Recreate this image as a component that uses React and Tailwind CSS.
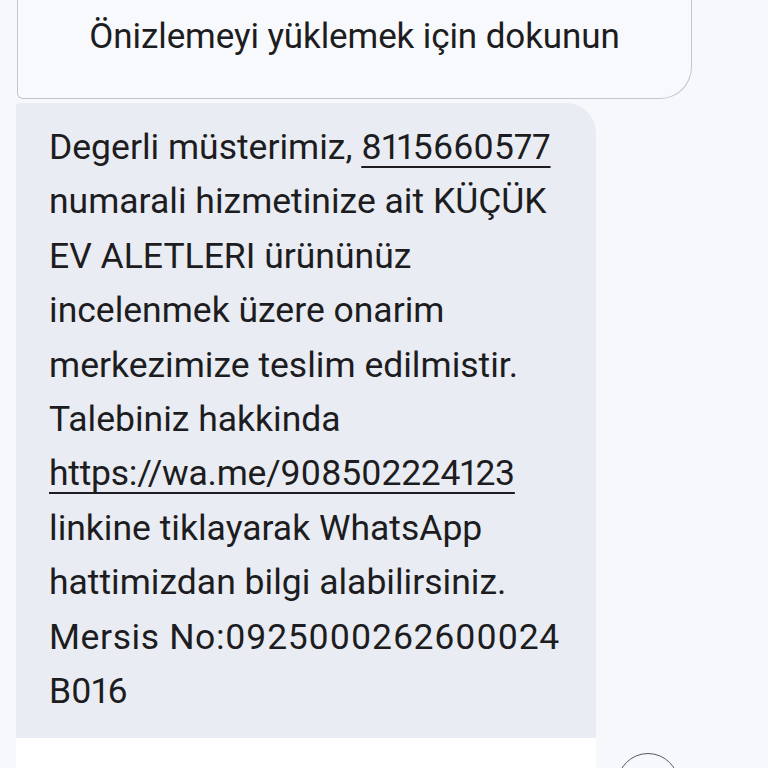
import React from "react";

function Link({ children, className = "" }) {
  return <span className={"underline decoration-[2px] underline-offset-[7px] " + className}>{children}</span>;
}

export default function App() {
  return (
    <div className="w-[768px] h-[768px] overflow-hidden bg-[#f7f8fc] relative font-['Roboto','Noto_Sans',sans-serif] [font-variant-numeric:proportional-nums] text-[#1d1d21]">
      <div className="ml-[17px] w-[675px] h-[99px] border border-t-0 border-[#c4c5ca] rounded-bl-[6px] rounded-br-[32px] bg-[#f8f9fd] pt-[17px] text-center">
        <span className="block text-[35px] leading-[40px] tracking-[-0.1px]">Önizlemeyi yüklemek için dokunun</span>
      </div>
      <div className="ml-[16px] mt-[4px] w-[580px] h-[635px] bg-[#e9ecf3] rounded-tr-[30px] rounded-tl-[4px] pl-[33px] pt-[17px]">
        <p className="text-[35.5px] leading-[54.4px] whitespace-nowrap">
          Degerli müsterimiz, <Link>8115660577</Link>
          <br />numarali hizmetinize ait KÜÇÜK
          <br />EV ALETLERI ürününüz
          <br />incelenmek üzere onarim
          <br />merkezimize teslim edilmistir.
          <br />Talebiniz hakkinda
          <br /><Link className="tracking-[-0.25px]">https://wa.me/908502224123</Link>
          <br />linkine tiklayarak WhatsApp
          <br />hattimizdan bilgi alabilirsiniz.
          <br /><span className="tracking-[0.6px]">Mersis No:0925000262600024</span>
          <br />B016
        </p>
      </div>
      <div className="ml-[16px] w-[580px] h-[40px] bg-white"></div>
      <div className="absolute left-[617px] top-[753px] w-[62px] h-[62px] rounded-full border-[1.5px] border-[#5a5a5e]"></div>
    </div>
  );
}
